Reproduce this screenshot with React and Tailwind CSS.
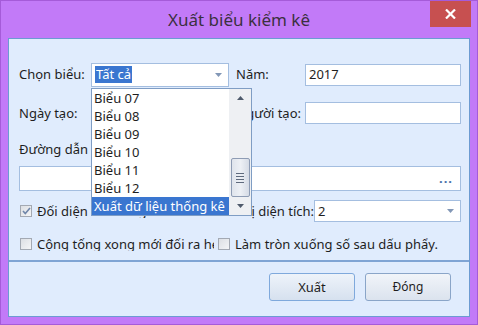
import React from "react";

function Arrow({ down = true, color = "#6b7f9e" }) {
  return (
    <svg width="7" height="4" viewBox="0 0 7 4">
      {down ? <path d="M0 0h7L3.5 4z" fill={color} /> : <path d="M0 4h7L3.5 0z" fill={color} />}
    </svg>
  );
}

function Check({ checked }) {
  return (
    <span className="w-[12px] h-[12px] shrink-0 border border-[#a3a9b3] bg-gradient-to-br from-[#dcdfe4] to-[#f4f5f7] flex items-center justify-center">
      {checked && (
        <svg width="9" height="8" viewBox="0 0 9 8">
          <path d="M1 4l2.3 2.5L8 1" stroke="#6f86aa" strokeWidth="1.6" fill="none" />
        </svg>
      )}
    </span>
  );
}

const items = ["Biểu 07", "Biểu 08", "Biểu 09", "Biểu 10", "Biểu 11", "Biểu 12"];

export default function App() {
  return (
    <div className="w-[478px] h-[325px] bg-[#c27af8] border border-[#a55bd9] flex flex-col font-['Noto_Sans',sans-serif] text-[13px] text-[#1e1e1e] leading-none">
      {/* title bar */}
      <div className="relative h-[37px] flex items-center justify-center">
        <span className="text-[17px] text-[#3b3040] -mt-[1px]">Xuất biểu kiểm kê</span>
        <button className="absolute top-0 right-[6px] w-[41px] h-[26px] bg-[#c75050] flex items-center justify-center">
          <svg width="11" height="10" viewBox="0 0 11 10">
            <path d="M1 0.5l9 9M10 0.5l-9 9" stroke="#fff" strokeWidth="2.2" />
          </svg>
        </button>
      </div>

      {/* client area */}
      <div className="mx-[7px] h-[279px] border border-[#6c9bd2] bg-[#e0ecfd] flex flex-col">
        <div className="relative h-[223px] pl-[10px] pr-[8px] pt-[24px] border-b-2 border-[#7fa4d4] flex flex-col">
          <div className="flex items-center h-[23px]">
            <span className="w-[72px]">Chọn biểu:</span>
            <div className="w-[138px] h-[24px] border border-[#a4bee0] bg-white flex items-center pl-[3px] pr-[6px]">
              <span className="bg-[#3a76d0] text-white px-[1px] py-[2px]">Tất cả</span>
              <span className="ml-auto"><Arrow color="#8297b6" /></span>
            </div>
            <span className="ml-[7px] w-[69px]">Năm:</span>
            <div className="flex-1 h-[22px] border border-[#a4bee0] bg-white flex items-center pl-[3px]">2017</div>
          </div>

          <div className="flex items-center h-[22px] mt-[16px]">
            <span className="w-[72px]">Ngày tạo:</span>
            <div className="w-[138px] h-[22px] border border-[#a4bee0] bg-white" />
            <span className="w-[76px] text-right pr-[4px]">Người tạo:</span>
            <div className="flex-1 h-[22px] border border-[#a4bee0] bg-white" />
          </div>

          <div className="h-[17px] mt-[17px] flex items-center">Đường dẫn lưu file:</div>

          <div className="h-[25px] mt-[8px] border border-[#a4bee0] bg-white flex items-center justify-end pr-[7px] text-[#4a70a8] tracking-[1px] font-bold">
            ...
          </div>

          <div className="flex items-center h-[22px] mt-[9px]">
            <div className="w-[210px] flex items-center overflow-hidden whitespace-nowrap">
              <span className="ml-[1px] mr-[5px]"><Check checked /></span>
              <span>Đổi diện tích sang hecta</span>
            </div>
            <span className="flex-1 text-right whitespace-nowrap">Đơn vị diện tích:</span>
            <div className="w-[156px] h-[22px] border border-[#a4bee0] bg-white flex items-center pl-[3px] pr-[6px]">
              <span>2</span>
              <span className="ml-auto"><Arrow color="#8297b6" /></span>
            </div>
          </div>

          <div className="flex items-center h-[18px] mt-[13px]">
            <div className="w-[195px] flex items-center overflow-hidden whitespace-nowrap">
              <span className="ml-[1px] mr-[5px]"><Check /></span>
              <span>Cộng tổng xong mới đổi ra hecta</span>
            </div>
            <div className="flex items-center whitespace-nowrap ml-[4px]">
              <span className="mr-[5px]"><Check /></span>
              <span>Làm tròn xuống số sau dấu phẩy.</span>
            </div>
          </div>

          {/* open dropdown list */}
          <div className="absolute left-[82px] top-[49px] w-[161px] h-[128px] border border-[#7f9dc4] bg-white flex">
            <div className="flex-1 flex flex-col">
              {items.map((t) => (
                <div key={t} className="h-[18px] flex items-center pl-[2px]">{t}</div>
              ))}
              <div className="h-[18px] flex items-center pl-[2px] bg-[#3a76d0] text-white whitespace-nowrap">Xuất dữ liệu thống kê</div>
            </div>
            <div className="w-[22px] bg-[#eef0f3] flex flex-col items-center">
              <div className="h-[18px] flex items-center justify-center"><Arrow down={false} color="#4f5a6b" /></div>
              <div className="flex-1" />
              <div className="w-[19px] h-[39px] border border-[#8e9cb4] rounded-[2px] bg-gradient-to-r from-[#dfe4ec] via-[#edf0f5] to-[#d5dbe5] flex flex-col items-center justify-center gap-[2px]">
                <span className="w-[8px] h-[1px] bg-[#5e6a7d]" />
                <span className="w-[8px] h-[1px] bg-[#5e6a7d]" />
                <span className="w-[8px] h-[1px] bg-[#5e6a7d]" />
                <span className="w-[8px] h-[1px] bg-[#5e6a7d]" />
              </div>
              <div className="h-[18px] flex items-center justify-center"><Arrow color="#4f5a6b" /></div>
            </div>
          </div>
        </div>

        <div className="flex justify-end gap-[10px] pt-[11px] pr-[18px]">
          <button className="w-[86px] h-[28px] border border-[#7fa9dc] rounded-[3px] bg-gradient-to-b from-[#eef3fa] to-[#d6e1ef] text-[13px] text-[#1e1e1e]">Xuất</button>
          <button className="w-[86px] h-[28px] border border-[#8aa5c8] rounded-[3px] bg-gradient-to-b from-[#f1f4f9] to-[#dbe3ee] text-[12px] text-[#1e1e1e]">Đóng</button>
        </div>
      </div>
    </div>
  );
}
